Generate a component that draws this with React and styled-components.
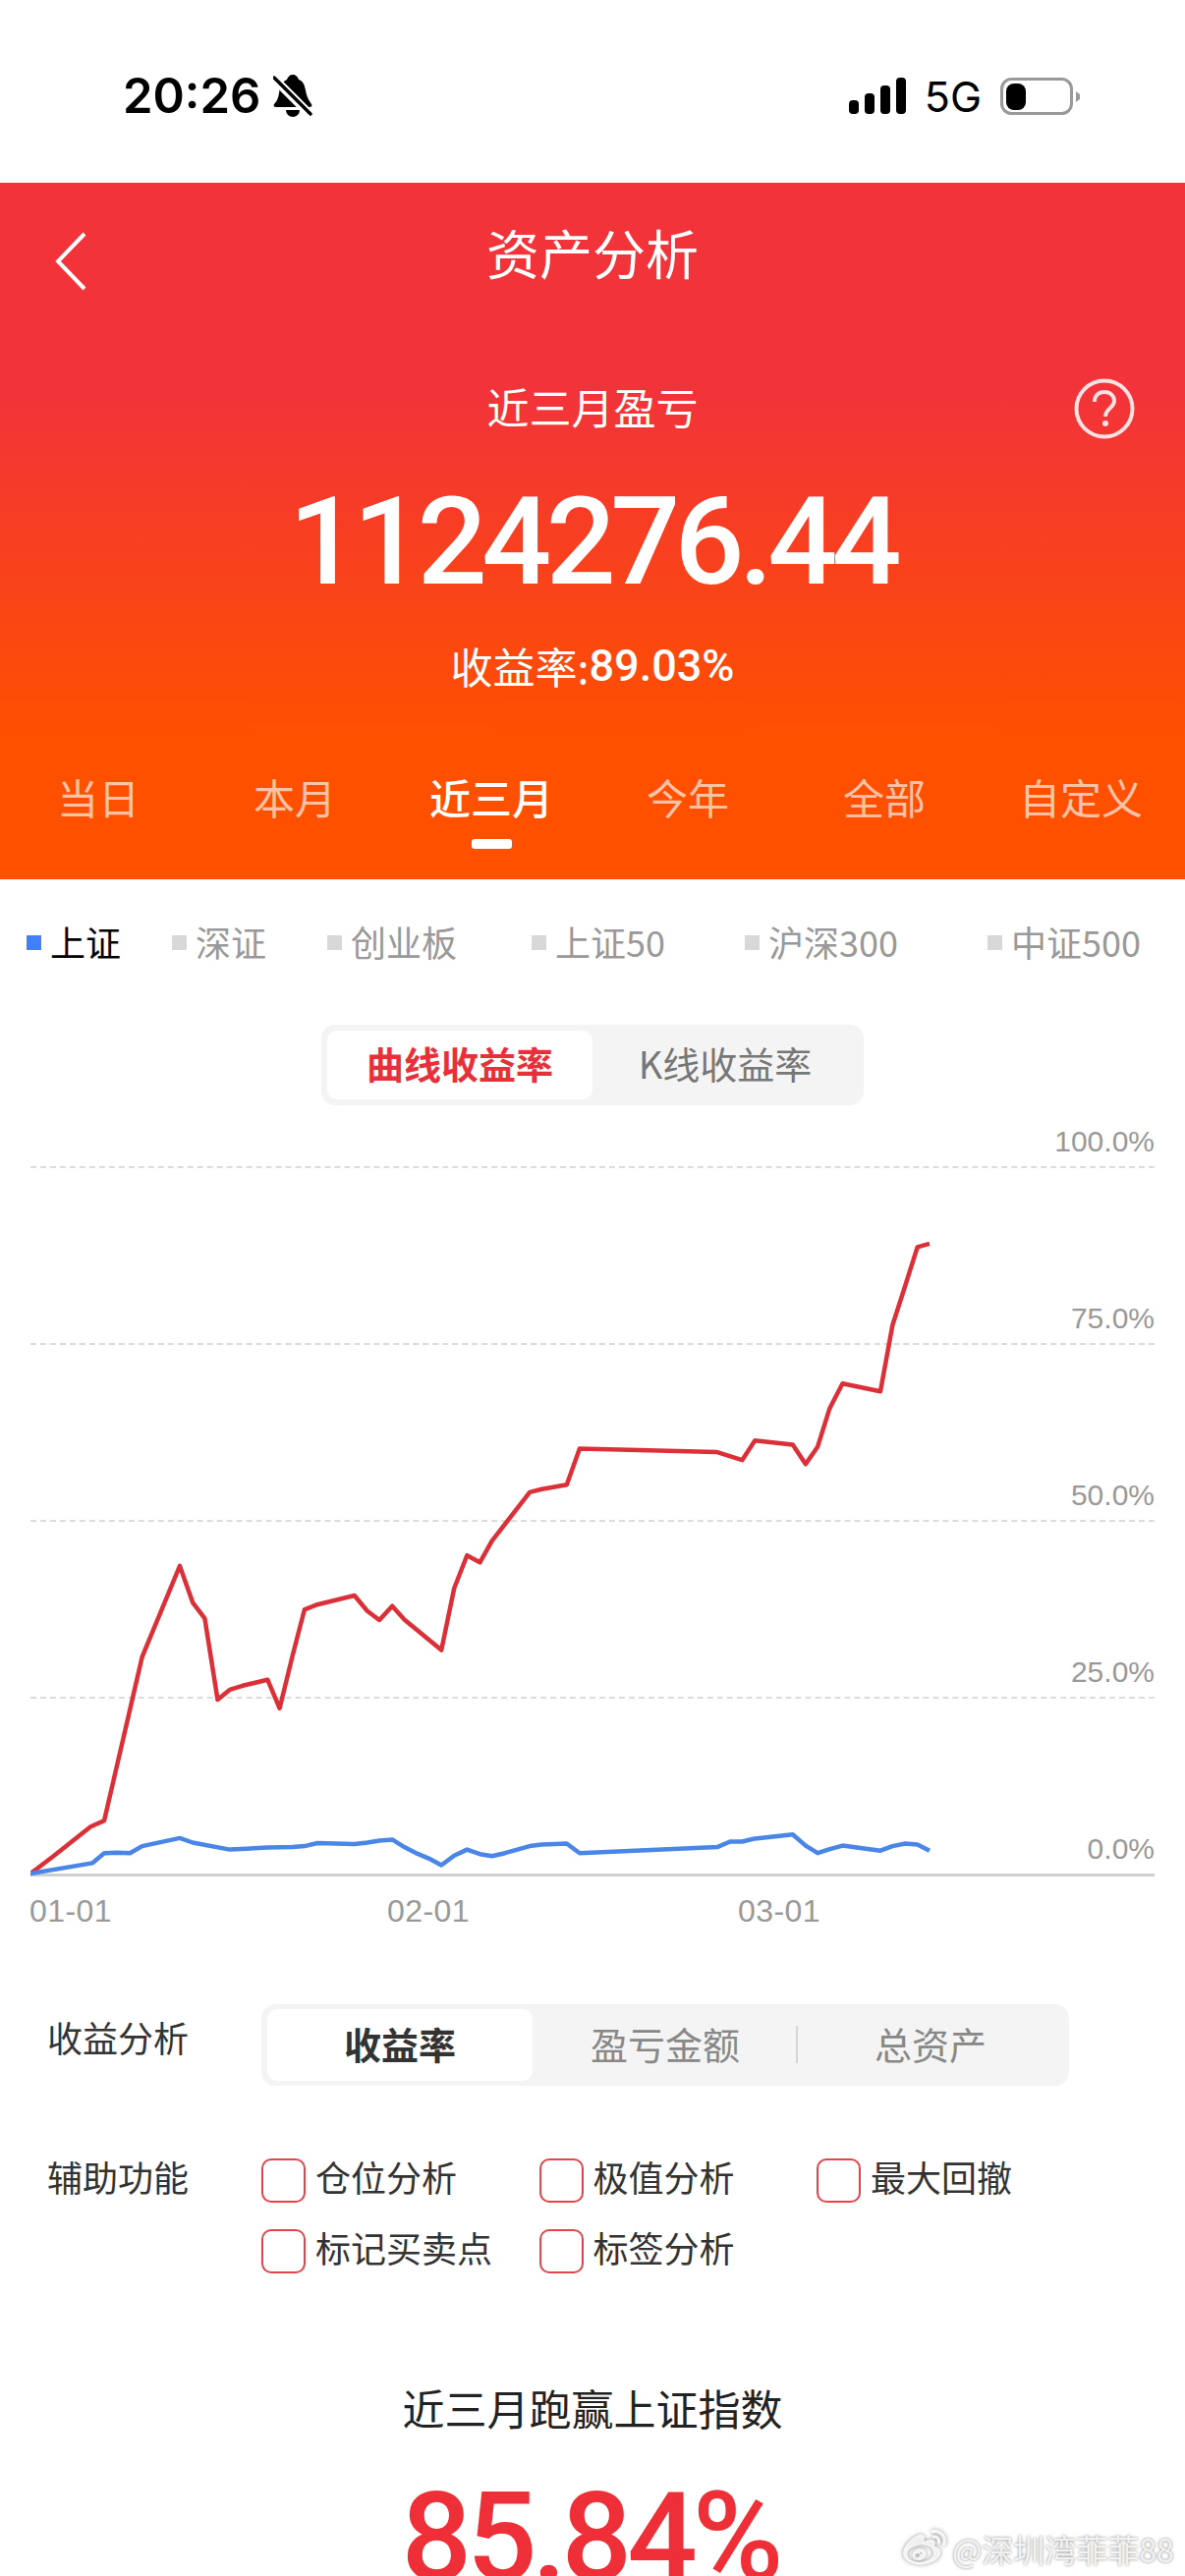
import React from 'react';
import styled, { createGlobalStyle } from 'styled-components';
import { FaWeibo } from 'react-icons/fa';

const CJK = `"Noto Sans CJK SC", "Noto Sans", sans-serif`;

const redPoints = [[40,1484],[70,1450],[120,1390],[138,1378],[188,1052],[238,870],[255,943],[271,975],[288,1137],[304,1117],[321,1109],[354,1097],[370,1154],[387,1050],[403,957],[420,947],[469,929],[486,960],[502,978],[519,950],[535,977],[584,1038],[601,915],[618,849],[635,863],[651,820],[701,723],[717,717],[750,708],[767,636],[949,643],[982,659],[999,620],[1049,628],[1066,667],[1082,632],[1098,555],[1115,506],[1165,522],[1181,390],[1198,310],[1214,234],[1230,227]];
const bluePoints = [[40,1484],[122,1463],[138,1443],[155,1442],[172,1443],[188,1429],[238,1413],[255,1422],[304,1436],[354,1432],[387,1431],[403,1429],[420,1423],[469,1425],[486,1422],[502,1418],[519,1416],[535,1431],[552,1444],[568,1454],[584,1467],[601,1448],[618,1436],[635,1445],[651,1449],[668,1443],[701,1429],[717,1426],[750,1424],[767,1443],[949,1431],[966,1420],[982,1420],[999,1414],[1049,1406],[1066,1428],[1082,1443],[1098,1435],[1115,1428],[1165,1438],[1181,1429],[1198,1424],[1214,1426],[1230,1438]];

const toLine = (pts) => pts.map(([x, y]) => `${(x * 0.7691 - 31).toFixed(1)},${(y * 0.5102 + 25).toFixed(1)}`).join(' ');

const periods = ['当日', '本月', '近三月', '今年', '全部', '自定义'];
const markets = ['上证', '深证', '创业板', '上证50', '沪深300', '中证500'];
const scale = [['100.0%', 64], ['75.0%', 180], ['50.0%', 180], ['25.0%', 180]];
const features = ['仓位分析', '极值分析', '最大回撤', '标记买卖点', '标签分析'];

const Global = createGlobalStyle`
  html, body { margin: 0; padding: 0; background: #fff; }
  * { box-sizing: border-box; }
`;

const Page = styled.div`
  position: relative;
  width: 1206px;
  height: 2622px;
  overflow: hidden;
  background: #fff;
  font-family: ${CJK};
`;

const StatusBar = styled.div`
  height: 186px;
  padding: 9px 106px 0 125px;
  display: flex;
  align-items: center;
  justify-content: space-between;
  color: #000;
  font-family: Inter, sans-serif;
`;

const StatusGroup = styled.div`
  display: flex;
  align-items: center;
  gap: ${(p) => p.$gap}px;
`;

const Clock = styled.span`
  font-size: 49px;
  font-weight: 600;
  line-height: 50px;
`;

const Network = styled.span`
  font-size: 43px;
  line-height: 40px;
`;

const Header = styled.div`
  height: 709px;
  color: #fff;
  background: linear-gradient(180deg, #f2333a 0%, #f2333a 30%, #ff5000 80%, #ff5000 100%);
`;

const Nav = styled.div`
  height: 142px;
  padding: 0 56px;
  display: grid;
  grid-template-columns: 1fr auto 1fr;
  align-items: center;
`;

const NavTitle = styled.div`
  font-size: 54px;
  line-height: 60px;
  font-weight: 400;
`;

const BackIcon = styled.svg`
  margin-top: 18px;
`;

const SummaryLabel = styled.div`
  height: 164px;
  padding: 5px 51px 0;
  display: grid;
  grid-template-columns: 1fr auto 1fr;
  align-items: center;
  font-size: 43px;
  font-weight: 400;
  svg { justify-self: end; margin-top: 6px; }
`;

const Amount = styled.div`
  height: 114px;
  padding-top: 6px;
  text-align: center;
  font-family: Roboto, sans-serif;
  font-size: 125px;
  font-weight: 500;
  line-height: 108px;
  letter-spacing: -5.6px;
`;

const Rate = styled.div`
  height: 142px;
  display: flex;
  align-items: center;
  justify-content: center;
  font-size: 43px;
  font-weight: 400;
  b {
    font-family: Roboto, sans-serif;
    font-weight: 500;
    font-size: 45px;
  }
`;

const Tabs = styled.div`
  display: grid;
  grid-template-columns: repeat(6, 200px);
  padding-top: 43px;
`;

const Tab = styled.div`
  display: flex;
  flex-direction: column;
  align-items: center;
  gap: 23px;
  font-size: 42px;
  line-height: 40px;
  font-weight: ${(p) => (p.$active ? 500 : 400)};
  color: ${(p) => (p.$active ? '#fff' : 'rgba(255,255,255,.68)')};
`;

const TabMark = styled.i`
  width: 41px;
  height: 10px;
  border-radius: 3px;
  background: #fff;
`;

const Markets = styled.div`
  display: grid;
  grid-template-columns: 148px 158px 208px 217px 247px auto;
  padding: 45px 0 0 27px;
`;

const Market = styled.div`
  display: flex;
  align-items: center;
  gap: 9px;
  font-size: 36px;
  line-height: 36px;
  font-weight: 400;
  color: ${(p) => (p.$active ? '#000' : '#999')};
  &::before {
    content: '';
    width: 15px;
    height: 15px;
    margin-top: 3px;
    background: ${(p) => (p.$active ? '#437ffa' : '#d8d8d8')};
  }
`;

const Segment = styled.div`
  display: grid;
  grid-template-columns: repeat(${(p) => p.$count}, 270px);
  width: fit-content;
  padding: ${(p) => p.$pad}px 6px;
  border-radius: 14px;
  background: #f4f4f4;
`;

const SegmentItem = styled.div`
  position: relative;
  display: flex;
  align-items: center;
  justify-content: center;
  height: ${(p) => p.$h}px;
  padding-bottom: 5px;
  border-radius: 10px;
  font-size: 38px;
  font-weight: ${(p) => (p.$active ? 700 : 400)};
  color: ${(p) => (p.$active ? p.$color : p.$muted)};
  background: ${(p) => (p.$active ? '#fff' : 'transparent')};
`;

const SegmentDivider = styled.i`
  position: absolute;
  right: 0;
  top: 17px;
  width: 2px;
  height: 38px;
  background: #d6d6d6;
`;

const ChartType = styled.div`
  display: flex;
  justify-content: center;
  margin-top: 67px;
`;

const Chart = styled.div`
  position: relative;
  margin: 0 31px;
`;

const GridRow = styled.div`
  height: ${(p) => p.$h}px;
  display: flex;
  align-items: flex-end;
  justify-content: flex-end;
  padding-bottom: 10px;
  border-bottom: 2px dashed #dcdcdc;
  color: #999;
  font-family: "Liberation Sans", sans-serif;
  font-size: 30px;
  line-height: 30px;
`;

const Axis = styled(GridRow)`
  border-bottom: 3px solid #cfcfcf;
`;

const Lines = styled.svg`
  position: absolute;
  left: 0;
  top: 0;
`;

const Dates = styled.div`
  display: grid;
  grid-template-columns: 364px 357px auto;
  padding: 17px 0 0 30px;
  color: #999;
  font-family: "Liberation Sans", sans-serif;
  font-size: 32px;
  line-height: 36px;
  letter-spacing: 0.4px;
`;

const OptionRow = styled.div`
  display: grid;
  grid-template-columns: 218px auto;
  padding-left: 48px;
  margin-top: ${(p) => p.$top}px;
`;

const OptionLabel = styled.div`
  font-size: 36px;
  line-height: 36px;
  font-weight: 400;
  color: #333;
  padding-top: ${(p) => p.$offset}px;
`;

const Checks = styled.div`
  display: grid;
  grid-template-columns: repeat(3, 282.5px);
  row-gap: 31px;
`;

const Check = styled.label`
  display: flex;
  align-items: flex-start;
  gap: 10px;
  height: 41px;
  font-size: 36px;
  line-height: 36px;
  color: #333;
  &::before {
    content: '';
    width: 41px;
    height: 41px;
    border: 2px solid #e5434a;
    border-radius: 10px;
  }
`;

const Versus = styled.div`
  margin-top: 120px;
  text-align: center;
  font-size: 43px;
  line-height: 40px;
  color: #222;
`;

const Beat = styled.div`
  margin-top: 50px;
  padding-right: 5px;
  text-align: center;
  font-family: Roboto, sans-serif;
  font-size: 126px;
  font-weight: 500;
  line-height: 126px;
  letter-spacing: -5px;
  color: #ee2f38;
`;

const Watermark = styled.div`
  position: absolute;
  left: 919px;
  top: 2572px;
  display: flex;
  align-items: center;
  gap: 6px;
  font-size: 32px;
  line-height: 40px;
  white-space: nowrap;
  color: rgba(255, 255, 255, 0.85);
  text-shadow: 0 0 3px rgba(0, 0, 0, 0.5);
  svg { filter: drop-shadow(0 0 2px rgba(0, 0, 0, 0.5)); }
`;

const BellOff = () => (
  <svg width="40" height="44" viewBox="0 0 40 44">
    <path d="M20 0c3 0 5 2 6 5 5 2 6 6 7 11 1 6 3 10 6 14 1 2 0 3-2 3H3c-2 0-3-1-2-3 3-3 4-6 5-11 1-7 3-12 8-14 1-3 3-5 6-5z" fill="#000" />
    <path d="M13 36a7 7 0 0 0 14 0z" fill="#000" />
    <path d="M-2 1 40 43" stroke="#fff" strokeWidth="9" />
    <path d="M1 3 38 40" stroke="#000" strokeWidth="3.4" strokeLinecap="round" />
  </svg>
);

const Signal = () => (
  <svg width="58" height="37" viewBox="0 0 58 37">
    <rect x="0" y="23" width="10" height="14" rx="4" />
    <rect x="16" y="16" width="10" height="21" rx="4" />
    <rect x="32" y="8" width="10" height="29" rx="4" />
    <rect x="48" y="0" width="10" height="37" rx="4" />
  </svg>
);

const Battery = () => (
  <svg width="82" height="38" viewBox="0 0 82 38">
    <rect x="1.5" y="1.5" width="71" height="35" rx="10" fill="none" stroke="#999" strokeWidth="3" />
    <rect x="6" y="6" width="20" height="27" rx="8" fill="#000" />
    <path d="M77 14l4 3v5l-4 3z" fill="#999" />
  </svg>
);

const BackArrow = () => (
  <BackIcon width="32" height="60" viewBox="0 0 32 60">
    <path d="M30 2 3 30l27 28" fill="none" stroke="#fff" strokeWidth="4" />
  </BackIcon>
);

const HelpIcon = () => (
  <svg width="62" height="62" viewBox="0 0 62 62">
    <circle cx="31" cy="31" r="28.5" fill="none" stroke="#fff" strokeOpacity=".85" strokeWidth="4" />
    <path d="M21 24c0-6 4-10 10-10s10 4 10 9c0 7-9 8-9 16" fill="none" stroke="#fff" strokeOpacity=".85" strokeWidth="4" />
    <circle cx="32" cy="46" r="3" fill="#fff" fillOpacity=".85" />
  </svg>
);

export default function App() {
  return (
    <Page>
      <Global />
      <StatusBar>
        <StatusGroup $gap={13}>
          <Clock>20:26</Clock>
          <BellOff />
        </StatusGroup>
        <StatusGroup $gap={19}>
          <Signal />
          <Network>5G</Network>
          <Battery />
        </StatusGroup>
      </StatusBar>

      <Header>
        <Nav>
          <BackArrow />
          <NavTitle>资产分析</NavTitle>
        </Nav>
        <SummaryLabel>
          <span />
          <span>近三月盈亏</span>
          <HelpIcon />
        </SummaryLabel>
        <Amount>1124276.44</Amount>
        <Rate>收益率:<b>89.03%</b></Rate>
        <Tabs>
          {periods.map((name) => (
            <Tab key={name} $active={name === '近三月'}>
              {name}
              {name === '近三月' && <TabMark />}
            </Tab>
          ))}
        </Tabs>
      </Header>

      <Markets>
        {markets.map((name) => (
          <Market key={name} $active={name === '上证'}>{name}</Market>
        ))}
      </Markets>

      <ChartType>
        <Segment $count={2} $pad={6}>
          <SegmentItem $h={70} $active $color="#e8303a">曲线收益率</SegmentItem>
          <SegmentItem $h={70} $muted="#777">K线收益率</SegmentItem>
        </Segment>
      </ChartType>

      <Chart>
        {scale.map(([label, h]) => (
          <GridRow key={label} $h={h}>{label}</GridRow>
        ))}
        <Axis $h={181}>0.0%</Axis>
        <Lines width="1144" height="790" viewBox="0 0 1144 790" fill="none" strokeWidth="4.5" strokeLinejoin="round">
          <polyline points={toLine(redPoints)} stroke="#dc3039" />
          <polyline points={toLine(bluePoints)} stroke="#4a86e8" />
        </Lines>
      </Chart>
      <Dates>
        <span>01-01</span>
        <span>02-01</span>
        <span>03-01</span>
      </Dates>

      <OptionRow $top={77}>
        <OptionLabel $offset={15}>收益分析</OptionLabel>
        <Segment $count={3} $pad={5}>
          <SegmentItem $h={73} $active $color="#333">收益率</SegmentItem>
          <SegmentItem $h={73} $muted="#888">盈亏金额<SegmentDivider /></SegmentItem>
          <SegmentItem $h={73} $muted="#888">总资产</SegmentItem>
        </Segment>
      </OptionRow>

      <OptionRow $top={74}>
        <OptionLabel $offset={0}>辅助功能</OptionLabel>
        <Checks>
          {features.map((name) => (
            <Check key={name}>{name}</Check>
          ))}
        </Checks>
      </OptionRow>

      <Versus>近三月跑赢上证指数</Versus>
      <Beat>85.84%</Beat>

      <Watermark>
        <FaWeibo size={44} />
        @深圳湾菲菲88
      </Watermark>
    </Page>
  );
}
